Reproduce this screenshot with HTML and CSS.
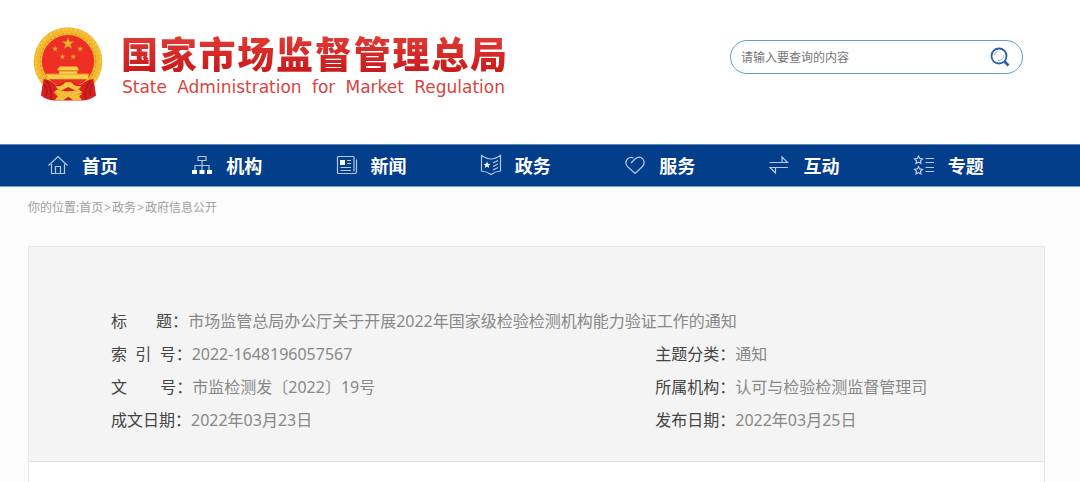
FILE: index.html
```
<!DOCTYPE html>
<html lang="zh-CN">
<head>
    <meta charset="UTF-8">
    <meta name="viewport" content="width=device-width, initial-scale=1.0">
    <title>国家市场监督管理总局</title>
    <link rel="stylesheet" href="styles.css">
</head>
<body>
    <header class="header">
        <a class="logo" href="#">
            <svg class="emblem" viewBox="38 33 212 227" aria-hidden="true">
                <path d="M70 192 L62 242 Q82 258 108 257 L182 257 Q208 258 229 242 L221 192 Z" fill="#d3221f"/>
                <circle cx="144" cy="139" r="104" fill="#f2b92e"/>
                <circle cx="144" cy="139" r="98" fill="none" stroke="#f7c945" stroke-width="5" stroke-dasharray="7 6"/>
                <circle cx="144" cy="139" r="84" fill="none" stroke="#d99a20" stroke-width="4" stroke-dasharray="6 7"/>
                <circle cx="144" cy="138" r="79" fill="#ee2d24"/>
                <path d="M144 66 l4.500 12.500 h13.500 l-10.500 8.500 4 13.500 -11.500 -8 -11.500 8 4 -13.500 -10.500 -8.500 h13.500 Z" fill="#e8b035" stroke="#bd7a1c" stroke-width="1.500"/>
                <g fill="#e8a735" stroke="#c07a20">
                    <path id="star" d="M105 91 l2 6.500 h7 l-5.500 4 2 7 -5.500 -4 -5.500 4 2 -7 -5.500 -4 h7 Z"/>
                    <use href="#star" x="76"/>
                    <use href="#star" x="22" y="24"/>
                    <use href="#star" x="55" y="24"/>
                </g>
                <path d="M119 154 h52 l5 8 v4 h-64 v-4 Z M117 168 h55 v8 h35 l-3 17 H84 l-7 -17 h40 Z" fill="#f9cf45"/>
                <path d="M84 178 h122 M117 169 h55" stroke="#dc982d" stroke-width="2"/>
                <path d="M70 192 Q88 194 102 206 Q113 214 121 207 L144 196 L168 207 Q177 214 188 206 Q203 194 221 192 L226 239 Q207 245 192 238 L178 223 L145 231 L111 223 L96 238 Q80 245 65 239 Z" fill="#d91f20"/>
                <path d="M78 197 Q97 220 93 252 M212 197 Q193 220 197 252 M70 207 Q85 220 78 243 M220 207 Q205 220 212 243" fill="none" stroke="#a91518" stroke-width="4"/>
                <path d="M106 213 Q126 216 134 203 Q144 197 156 203 Q164 216 184 213 Q174 230 158 223 L145 216 L132 223 Q116 230 106 213 Z" fill="#f8c63b"/>
                <path d="M103 236 Q120 242 133 232 Q145 226 158 232 Q171 242 188 236 L178 244 L186 256 H160 L145 246 L130 256 H104 L113 244 Z" fill="#f3bd37"/>
            </svg>
            <span class="logo-text">
                <span class="logo-cn">国家市场监督管理总局</span>
                <span class="logo-en" lang="en">State Administration for Market Regulation</span>
            </span>
        </a>
        <form class="search" role="search">
            <input type="text" class="search-input" placeholder="请输入要查询的内容" aria-label="请输入要查询的内容">
            <button type="button" class="search-btn" aria-label="搜索">
                <svg viewBox="0 0 20 20" fill="none" stroke="#2c5ea8">
                    <circle cx="9" cy="9" r="7.500" stroke-width="1.800"/>
                    <path d="M14.500 14.500 L18.500 18.500" stroke-width="2.600"/>
                    <path d="M13.500 8 Q13.500 13 8 13.500 M4.500 8 Q5 5 8 4.500" stroke="#8fb0d8"/>
                </svg>
            </button>
        </form>
    </header>

    <nav class="nav">
        <a href="#">
            <svg viewBox="0 0 20 20"><path d="M.5 10.500 L10 1.500 L19.500 10.500 M3.500 9 V18.500 H16.500 V9 M7.500 18.500 V11.500 H12.500 V18.500"/></svg>
            首页
        </a>
        <a href="#">
            <svg viewBox="0 0 20 20"><path d="M6 1.500 H14 V5.500 H6 Z M10 5.500 V10.500 M3 15 V10.500 H17 V15 M10 10.500 V15"/><path class="solid" d="M0 15 H5 V19 H0 Z M7.500 15 H12.500 V19 H7.500 Z M15 15 H20 V19 H15 Z"/></svg>
            机构
        </a>
        <a href="#">
            <svg viewBox="0 0 20 20"><path d="M17 4.500 V2.500 Q17 1.500 16 1.500 H1.500 Q.5 1.500 .5 2.500 V17.500 Q.5 18.500 1.500 18.500 H18 Q19.500 18.500 19.500 17 V4.500 M17 4.500 V16.500 M10 5.500 H14 M10 8.500 H14 M3.500 12.500 H14 M3.500 15.500 H14"/><path class="solid" d="M3 5 H8 V10 H3 Z"/></svg>
            新闻
        </a>
        <a href="#">
            <svg viewBox="0 0 20 20"><path d="M.5 .5 Q6 4 10 4 Q14 4 19.500 .5 V16 Q14 16.500 10 19.500 Q6 16.500 .5 16 Z M12 8 L17 5.500 M12 11.500 L17 9 M12 15 L17 12.500"/><path class="solid" d="M6 6.500 l1 2.200 2.400 .2 -1.800 1.600 .6 2.500 -2.200 -1.400 -2.200 1.400 .6 -2.500 -1.800 -1.600 2.400 -.2 Z"/></svg>
            政务
        </a>
        <a href="#">
            <svg viewBox="0 0 20 20"><path d="M6 8 L10 4 Q14 .5 17.500 3.500 Q21 8 17 12 L10 18.500 L3 12 Q-1 8 2.500 4 Q5 1.500 8.500 3"/></svg>
            服务
        </a>
        <a href="#">
            <svg viewBox="0 0 20 20"><path d="M.5 7.500 H18.500 L13 2 V7 M19 12.500 H1 L6.500 18 V13"/></svg>
            互动
        </a>
        <a href="#">
            <svg viewBox="0 0 20 20"><path d="M4.500 1 l1.200 2.400 2.800 .4 -2 1.900 .5 2.700 -2.500 -1.300 -2.500 1.300 .5 -2.700 -2 -1.900 2.800 -.4 Z M4.500 11.500 l1.200 2.400 2.800 .4 -2 1.900 .5 2.700 -2.500 -1.300 -2.500 1.300 .5 -2.700 -2 -1.900 2.800 -.4 Z M11.500 3.500 H20 M11.500 7.500 H20 M11.500 12.500 H20 M11.500 16.500 H20"/></svg>
            专题
        </a>
    </nav>

    <main class="main">
        <div class="breadcrumb">你的位置:<a href="#">首页</a><span>&gt;</span><a href="#">政务</a><span>&gt;</span><a href="#">政府信息公开</a></div>

        <article class="article">
            <dl class="info">
                <div class="wide"><dt>标&nbsp;&nbsp;&nbsp;&nbsp;&nbsp;&nbsp;&nbsp;题：</dt><dd>市场监管总局办公厅关于开展2022年国家级检验检测机构能力验证工作的通知</dd></div>
                <div><dt>索&nbsp;&nbsp;引&nbsp;&nbsp;号：</dt><dd>2022-1648196057567</dd></div>
                <div><dt>主题分类：</dt><dd>通知</dd></div>
                <div><dt>文&nbsp;&nbsp;&nbsp;&nbsp;&nbsp;&nbsp;&nbsp;&nbsp;号：</dt><dd>市监检测发〔2022〕19号</dd></div>
                <div><dt>所属机构：</dt><dd>认可与检验检测监督管理司</dd></div>
                <div><dt>成文日期：</dt><dd>2022年03月23日</dd></div>
                <div><dt>发布日期：</dt><dd>2022年03月25日</dd></div>
            </dl>
        </article>
    </main>
</body>
</html>
```
FILE: styles.css
```
* {
    box-sizing: border-box;
}

body {
    margin: 0;
    min-height: 100vh;
    display: flex;
    flex-direction: column;
    font-family: "Noto Sans", "Noto Sans CJK SC", sans-serif;
    background-color: #fcfcfc;
    color: #444;
}

a {
    color: inherit;
    text-decoration: none;
}

.header {
    display: flex;
    justify-content: space-between;
    align-items: flex-start;
    padding: 26px 57px 42px 33px;
    background-color: #fff;
}

.logo {
    display: flex;
    gap: 18px;
}

.emblem {
    width: 70px;
    height: 76px;
}

.logo-text {
    display: flex;
    flex-direction: column;
    gap: 6px;
    width: 386px;
    padding-top: 8px;
    text-align-last: justify;
    white-space: nowrap;
}

.logo-cn {
    font-family: "Noto Sans CJK SC", sans-serif;
    font-size: 37px;
    font-weight: 900;
    line-height: 38px;
    background: linear-gradient(#e23c36, #c91a1c);
    background-clip: text;
    -webkit-background-clip: text;
    color: transparent;
}

.logo-en {
    padding: 0 2px 0 1px;
    font-family: "DejaVu Sans", sans-serif;
    font-size: 17px;
    line-height: 18px;
    color: #d64541;
}

.search {
    display: flex;
    align-items: center;
    width: 293px;
    height: 34px;
    margin-top: 14px;
    padding: 0 12px 0 10px;
    border: 1px solid #5a9fd6;
    border-radius: 17px;
}

.search-input {
    flex: 1;
    min-width: 0;
    padding: 0;
    border: none;
    outline: none;
    background: none;
    font-family: inherit;
    font-size: 12px;
}

.search-input::placeholder {
    color: #757575;
}

.search-btn {
    width: 20px;
    height: 20px;
    padding: 0;
    border: none;
    background: none;
    cursor: pointer;
}

.search-btn svg {
    display: block;
}

.nav {
    display: grid;
    grid-template-columns: repeat(7, 1fr);
    padding: 0 22px 0 48px;
    background-color: #023e8a;
    border-top: 1px solid #5c83b5;
    border-bottom: 1px solid #7f9dc4;
}

.nav a {
    display: flex;
    align-items: center;
    gap: 14px;
    height: 41px;
    padding-bottom: 2px;
    color: #fff;
    font-size: 18px;
    font-weight: bold;
}

.nav svg {
    width: 20px;
    height: 20px;
    overflow: visible;
    fill: none;
    stroke: #b7c9e2;
    stroke-width: 1.2;
}

.nav .solid {
    fill: #fff;
    stroke: none;
}

.main {
    flex: 1;
    display: flex;
    flex-direction: column;
    padding: 0 35px 0 28px;
}

.breadcrumb {
    padding: 11px 0 28px;
    font-size: 12px;
    line-height: 20px;
    color: #a0a0a0;
}

.breadcrumb span {
    margin: 0 1px;
}

.article {
    flex: 1;
    background-color: #fff;
    border: 1px solid #dfe8f1;
    border-bottom: none;
}

.info {
    display: grid;
    grid-template-columns: 7fr 5fr;
    margin: 0;
    padding: 58px 0 24px 82px;
    background-color: #f4f4f4;
    border-bottom: 1px solid #dcdcdc;
    font-size: 16px;
    line-height: 33px;
}

.info .wide {
    grid-column: 1 / -1;
}

.info dt,
.info dd {
    display: inline;
    margin: 0;
}

.info dd {
    color: #888;
}
```
